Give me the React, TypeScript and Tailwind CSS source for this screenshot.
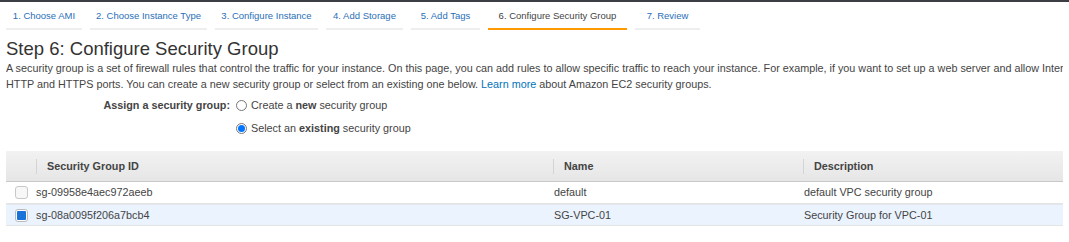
import { useState } from 'react'

const tabs = [
  { label: '1. Choose AMI', w: 'w-[76px]' },
  { label: '2. Choose Instance Type', w: 'w-[117px]' },
  { label: '3. Configure Instance', w: 'w-[103px]' },
  { label: '4. Add Storage', w: 'w-[77px]' },
  { label: '5. Add Tags', w: 'w-[69px]' },
  { label: '6. Configure Security Group', w: 'w-[139px]' },
  { label: '7. Review', w: 'w-[65px]' },
]

const groups = [
  { id: 'sg-09958e4aec972aeeb', name: 'default', desc: 'default VPC security group' },
  { id: 'sg-08a0095f206a7bcb4', name: 'SG-VPC-01', desc: 'Security Group for VPC-01' },
]

export default function App() {
  const [mode, setMode] = useState<'new' | 'existing'>('existing')
  const [selected, setSelected] = useState('sg-08a0095f206a7bcb4')

  return (
    <div className="w-[1069px] h-[242px] overflow-hidden bg-white font-['Liberation_Sans',Arial,sans-serif] text-[#444]">
      {/* top edge */}
      <div className="h-[2px] bg-[#3b3f45]" />

      {/* wizard tabs */}
      <div className="flex gap-2 px-[6px] pt-[8px] whitespace-nowrap">
        {tabs.map((t, i) => {
          const active = i === 5
          return (
            <div
              key={t.label}
              className={`${t.w} text-center pb-[6px] text-[9.5px] leading-[12px] border-b-2 ${
                active ? 'border-[#f90] text-[#444]' : 'border-[#eee] text-[#2a6fb8]'
              }`}
            >
              {t.label}
            </div>
          )
        })}
      </div>

      {/* heading + description */}
      <div className="px-[6px] pt-[8px]">
        <h1 className="text-[18.5px] leading-[22px] text-[#333]">Step 6: Configure Security Group</h1>
        <p className="text-[10.8px] leading-[16px] text-[#444] whitespace-nowrap overflow-hidden">
          A security group is a set of firewall rules that control the traffic for your instance. On this page, you can add rules to allow specific traffic to reach your instance. For example, if you want to set up a web server and allow Internet traffic to reach your instance, add rules that allow unrestricted access to the
          <br />
          HTTP and HTTPS ports. You can create a new security group or select from an existing one below.{' '}
          <span className="text-[#0073bb]">Learn more</span> about Amazon EC2 security groups.
        </p>
      </div>

      {/* assign */}
      <div className="flex pt-[6px] text-[10.8px] leading-[14px]">
        <div className="w-[236px] pr-[6px] text-right font-bold text-[#444]">Assign a security group:</div>
        <div className="flex flex-col gap-[9px]">
          <label className="flex items-center gap-[4px]" onClick={() => setMode('new')}>
            <Radio on={mode === 'new'} />
            <span>
              Create a <b>new</b> security group
            </span>
          </label>
          <label className="flex items-center gap-[4px]" onClick={() => setMode('existing')}>
            <Radio on={mode === 'existing'} />
            <span>
              Select an <b>existing</b> security group
            </span>
          </label>
        </div>
      </div>

      {/* table */}
      <div className="mx-[6px] mt-[16px] text-[10.8px]">
        <div className="flex h-[31px] items-center bg-gradient-to-b from-[#f2f2f2] to-[#e6e6e6] border-b border-[#c8c8c8] font-bold text-[#444]">
          <div className="w-[30px] h-full" />
          <HeadCell className="w-[517px]">Security Group ID</HeadCell>
          <HeadCell className="w-[250px]">Name</HeadCell>
          <HeadCell className="flex-1">Description</HeadCell>
        </div>
        {groups.map((g) => {
          const on = g.id === selected
          return (
            <div
              key={g.id}
              onClick={() => setSelected(g.id)}
              className={`flex h-[22px] items-center border-b border-[#e4e4e4] text-[#444] ${
                on ? 'bg-[#eaf3fe] border-t border-t-[#e4e8ee]' : 'bg-white'
              }`}
            >
              <div className="w-[30px] flex justify-center pl-[1px]">
                <Check on={on} />
              </div>
              <div className="w-[517px]">{g.id}</div>
              <div className="w-[250px] pl-[1px]">{g.name}</div>
              <div className="flex-1 pl-[1px]">{g.desc}</div>
            </div>
          )
        })}
      </div>
    </div>
  )
}

function HeadCell({ className, children }: { className: string; children: React.ReactNode }) {
  return (
    <div className={`${className} flex items-center h-full`}>
      <div className="w-px h-[15px] bg-[#d4d4d4]" />
      <span className="pl-[10px]">{children}</span>
    </div>
  )
}

function Radio({ on }: { on: boolean }) {
  return (
    <span className="w-[11px] h-[11px] rounded-full border border-[#767676] bg-white flex items-center justify-center shrink-0">
      {on && <span className="w-[7px] h-[7px] rounded-full bg-[#0075ff]" />}
    </span>
  )
}

function Check({ on }: { on: boolean }) {
  return (
    <span
      className={`w-[13px] h-[13px] rounded-[3px] border flex items-center justify-center ${
        on ? 'border-[#bbb] bg-white' : 'border-[#c8c8c8] bg-[#f7f7f7]'
      }`}
    >
      {on && <span className="w-[9px] h-[9px] rounded-[1px] bg-[#1a73d9]" />}
    </span>
  )
}
